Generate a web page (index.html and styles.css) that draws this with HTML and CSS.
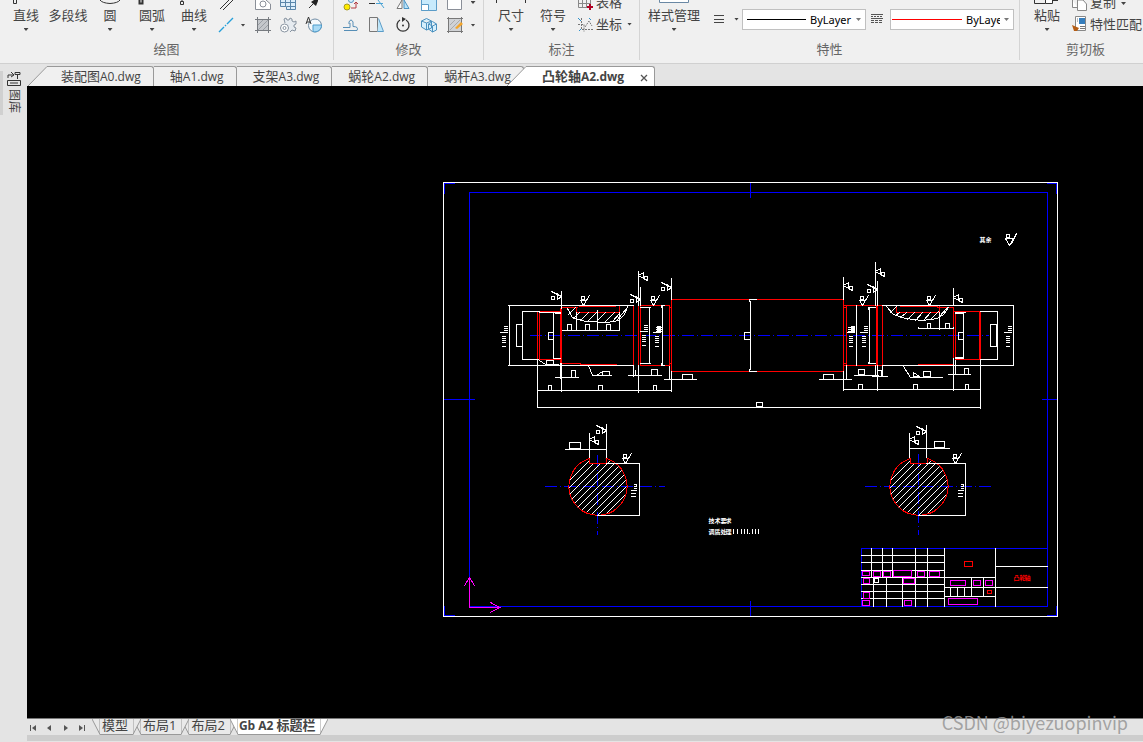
FILE: index.html
```html
<!DOCTYPE html>
<html lang="zh-CN">
<head>
<meta charset="utf-8">
<title>凸轮轴A2.dwg</title>
<link rel="stylesheet" href="styles.css">
</head>
<body>
<div class="app">
  <header class="ribbon">
    <section class="group" aria-label="绘图">
      <div class="tools draw-tools">
        <button class="tool"><svg width="34" height="7" viewBox="0 0 34 7"><path d="M4.500 0v3.500h3V0" class="ink"/></svg><span>直线</span><i class="caret"></i></button>
        <button class="tool"><svg width="34" height="7" viewBox="0 0 34 7"></svg><span>多段线</span></button>
        <button class="tool"><svg width="34" height="7" viewBox="0 0 34 7"><path d="M7 0Q9 3 17 3.500Q25 3 27 0" class="ink"/></svg><span>圆</span><i class="caret"></i></button>
        <button class="tool"><svg width="34" height="7" viewBox="0 0 34 7"><path d="M4.500 0v3.500h3V0" class="ink thick"/></svg><span>圆弧</span><i class="caret"></i></button>
        <button class="tool"><svg width="34" height="7" viewBox="0 0 34 7"><path d="M3.500 1.500h3v3h-3zM5 0v1" class="ink"/></svg><span>曲线</span><i class="caret"></i></button>
        <div class="icons">
          <button aria-label="构造线"><svg width="18" height="12" viewBox="0 0 18 12"><path d="M3 9L12 0M6 10L16 0" class="ink"/></svg></button>
          <i></i>
          <button aria-label="面域"><svg width="18" height="12" viewBox="0 0 18 12"><path d="M1.500 0v9.500h15V4L12 0" fill="#fff" stroke="#8a8f98"/><circle cx="9" cy="4" r="3" fill="none" stroke="#8a8f98"/></svg></button>
          <button aria-label="表格"><svg width="18" height="12" viewBox="0 0 18 12"><path d="M1.500 0v6.500h6v3h9V0" fill="#dceefb" stroke="#5a86aa"/><path d="M1 2.500h15M6.500 0v6M11.500 0v9M8 6.500h8" stroke="#5a86aa"/></svg></button>
          <button aria-label="点"><svg width="18" height="12" viewBox="0 0 18 12"><path d="M4 8L8 4" class="ink"/><path d="M6 2l3-2h4v1l-2 5z" fill="#222"/></svg></button>
          <button aria-label="中心线"><svg width="18" height="18" viewBox="0 0 18 18"><path d="M2 16L7 11M8 10l1-1M10 8l6-6" stroke="#26a0da" stroke-width="1.400"/></svg></button>
          <i class="caret"></i>
          <button aria-label="填充"><svg width="18" height="18" viewBox="0 0 18 18"><rect x="3" y="4" width="11" height="11" fill="#c4c7cb"/><path d="M1 3.500h16M1 14.500h16M3.500 1v16M14.500 1v16" stroke="#777b80"/><path d="M4 9l5-5M4 14L14 4M9 14l5-5" stroke="#9a9ea4"/></svg></button>
          <button aria-label="齿轮"><svg width="18" height="18" viewBox="0 0 18 18"><path d="M6 7L5 3l2-1 1 2h2l1-2 2 1v2l2 1 2-1v3l-2 1v2l2 1-1 3-3-1-2 2" fill="#e6ebf0" stroke="#8793a0"/><circle cx="5.500" cy="12" r="4" fill="#fff" stroke="#8793a0"/><circle cx="5.500" cy="12" r="1.500" stroke="#8793a0"/></svg></button>
          <button aria-label="属性"><svg width="18" height="18" viewBox="0 0 18 18"><circle cx="10" cy="9.500" r="6.500" fill="#f5f9fc" stroke="#6f8ca4"/><path d="M8 9h8.500a6.500 6.500 0 0 1-8.500 6.500z" fill="#a9daf5" stroke="#4c9bcb"/><path d="M1 8L3.500 1L6 8M2 6h3" class="ink"/></svg></button>
        </div>
      </div>
      <h2>绘图</h2>
    </section>
    <section class="group" aria-label="修改">
      <div class="tools">
        <div class="icons modify">
          <button aria-label="复制对象"><svg width="18" height="12" viewBox="0 0 18 12"><circle cx="5" cy="7" r="3" fill="#ffeb00" stroke="#a59a25"/><path d="M9 8h5V2l-2 2m2-2 2 2" fill="none" stroke="#b33b43"/><circle cx="9" cy="0" r="2.500" fill="#d7effc" stroke="#5794c2"/></svg></button>
          <button aria-label="修剪"><svg width="18" height="12" viewBox="0 0 18 12"><path d="M1 3.500h6" class="ink"/><path d="M8 3.500h7M10 0l6 8" stroke="#4aa3d4"/></svg></button>
          <button aria-label="镜像"><svg width="18" height="12" viewBox="0 0 18 12"><path d="M8 0v8.500H3z" fill="#fff" stroke="#777"/><path d="M10 0v8.500h5z" fill="#b9e2f8" stroke="#4d94c4"/></svg></button>
          <button aria-label="缩放"><svg width="18" height="12" viewBox="0 0 18 12"><path d="M1.500 0v10.500h15V0" fill="#c7eafc" stroke="#5b9cc8"/><path d="M1.500 4.500h7v6h-7z" fill="#fff" stroke="#5b9cc8"/></svg></button>
          <button aria-label="拉伸"><svg width="18" height="12" viewBox="0 0 18 12"><path d="M1.500 0v9.500h14V0" fill="#fff" stroke="#8a8f98"/></svg></button>
          <i class="caret"></i>
          <button aria-label="偏移"><svg width="18" height="18" viewBox="0 0 18 18"><path d="M2 14.500h13q2-4-4-4V6q-2-4-4 0v2M1 11.500h7V7" fill="none" stroke="#568eb6"/></svg></button>
          <button aria-label="倾斜"><svg width="18" height="18" viewBox="0 0 18 18"><path d="M1.500 1.500h8v14h-8z" fill="#eee" stroke="#777"/><path d="M10.500 2.500L15.500 15.500h-6" fill="#bde6fa" stroke="#5b9cc8"/></svg></button>
          <button aria-label="旋转"><svg width="18" height="18" viewBox="0 0 18 18"><path d="M6 4a6 6 0 1 0 6 0" fill="none" stroke="#333" stroke-width="1.300"/><path d="M8 1l4 2-4 3z" fill="#333"/><circle cx="9" cy="9.500" r="1" fill="#333"/></svg></button>
          <button aria-label="阵列"><svg width="18" height="18" viewBox="0 0 18 18"><path d="M1.500 5l5-2.500 5 2.500v7l-5 2-5-3zM1.500 5l5 2 5-2M6.500 7v7M8.500 8l4-2.500 4 2.500v6l-4 2-4-3zM8.500 8l4 2 4-2M12.500 10v6" fill="#d6effc" stroke="#4b91bf"/></svg></button>
          <button aria-label="编辑填充"><svg width="18" height="18" viewBox="0 0 18 18"><rect x="3" y="3" width="12" height="12" fill="#d0d2d5"/><path d="M1 2.500h16M1 15.500h16M2.500 1v16M15.500 1v16" stroke="#777"/><path d="M4 9l5-5M4 14L14 4" stroke="#aaa"/><path d="M9 12l6-6 2 2-6 5z" fill="#f3a52b"/></svg></button>
          <i class="caret"></i>
        </div>
      </div>
      <h2>修改</h2>
    </section>
    <section class="group" aria-label="标注">
      <div class="tools note-tools">
        <button class="tool"><svg width="34" height="7" viewBox="0 0 34 7"><path d="M2.500 0v3M31.500 0v3" class="ink"/></svg><span>尺寸</span><i class="caret"></i></button>
        <button class="tool"><svg width="34" height="7" viewBox="0 0 34 7"></svg><span>符号</span><i class="caret"></i></button>
        <div class="commands">
          <button class="command"><svg width="18" height="12" viewBox="0 0 18 12"><path d="M1.500 0v7.500h12V0M1 3.500h13M5.500 0v7M9.500 0v7" fill="none" stroke="#888"/><path d="M10 7h6M13 4v6" stroke="#b00022" stroke-width="2"/></svg><span>表格</span></button>
          <button class="command"><svg width="18" height="18" viewBox="0 0 18 18"><path d="M4.500 3v11.500H16M1 9.500h6v7M8 12l4-6 3 5" fill="none" stroke="#777" stroke-dasharray="2 1"/><path d="M1 3l3 3M12 3l2 2M2 16l2-2" stroke="#2f91cb"/></svg><span>坐标</span><i class="caret"></i></button>
        </div>
      </div>
      <h2>标注</h2>
    </section>
    <section class="group" aria-label="特性">
      <div class="tools">
        <button class="tool wide"><svg width="34" height="7" viewBox="0 0 34 7"><path d="M2.500 0v2.500h29V0" fill="#fff" stroke="#6a88a4"/></svg><span>样式管理</span><i class="caret"></i></button>
        <button class="weight" aria-label="线宽"><svg width="10" height="10" viewBox="0 0 10 10"><path d="M0 1.500h10M0 5.500h10M0 8.500h10" stroke="#444"/></svg><i class="caret"></i></button>
        <label class="combo"><span class="sample"></span><select aria-label="线型"><option>ByLayer</option></select><i class="caret"></i></label>
        <button class="dashes" aria-label="线型样式"><svg width="12" height="10" viewBox="0 0 12 10"><path d="M0 .500h12M0 4.500h12" stroke="#555"/><path d="M0 2.500h12" stroke="#555" stroke-dasharray="2 1"/><path d="M0 6.500h12M0 8.500h12" stroke="#555" stroke-dasharray="3 1"/></svg></button>
        <label class="combo red"><span class="sample"></span><select aria-label="颜色"><option>ByLayer</option></select><i class="caret"></i></label>
      </div>
      <h2>特性</h2>
    </section>
    <section class="group" aria-label="剪切板">
      <div class="tools note-tools">
        <button class="tool"><svg width="34" height="7" viewBox="0 0 34 7"><path d="M4.500 0v3.500h11" class="ink"/><path d="M15.500 0v3.500h7V0M22 .500h6" fill="#fff" stroke="#333"/></svg><span>粘贴</span><i class="caret"></i></button>
        <div class="commands">
          <button class="command"><svg width="18" height="12" viewBox="0 0 18 12"><path d="M1.500 0v7.500h5" fill="#fff" stroke="#888"/><path d="M6.500 0v10.500h9V4L12 0z" fill="#fff" stroke="#888"/></svg><span>复制</span><i class="caret"></i></button>
          <button class="command"><svg width="18" height="18" viewBox="0 0 18 18"><path d="M4.500 1.500h10v14h-10z" fill="#fff" stroke="#888"/><path d="M8 3h6v6H8z" fill="#367ebd"/><path d="M6 4h1M6 6h1M9 11.500h5M9 13.500h5" stroke="#777"/><path d="M1 10l7 3-2 3H3z" fill="#b55e16"/></svg><span>特性匹配</span></button>
        </div>
      </div>
      <h2>剪切板</h2>
    </section>
  </header>

  <aside class="side">
    <button class="library">
      <svg width="14" height="16" viewBox="0 0 14 16"><path d="M1 7V4h5M4 1l3 3-3 2M8 1.500h5v2H8zM10.500 3v5M.500 9.500h13v5H.500zM3 12h8" fill="none" stroke="#333"/></svg>
      <span>图库</span>
    </button>
  </aside>

  <main class="work">
    <nav class="doc-tabs">
      <div class="doc first"><svg width="20" height="20" viewBox="0 0 20 20"><path d="M0 20L19 .500H20V20" fill="#f0f0f0" stroke="none"/><path d="M0 20L19 .500h1" fill="none" stroke="#999"/></svg><button><b>装配图</b>A0.dwg</button></div>
      <div class="doc"><button><b>轴</b>A1.dwg</button></div>
      <div class="doc"><button><b>支架</b>A3.dwg</button></div>
      <div class="doc"><button><b>蜗轮</b>A2.dwg</button></div>
      <div class="doc"><button><b>蜗杆</b>A3.dwg</button></div>
      <div class="doc active"><svg width="20" height="20" viewBox="0 0 20 20"><path d="M0 20L19 .500H20V20" fill="#fff" stroke="none"/><path d="M0 20L19 .500h1" fill="none" stroke="#999"/></svg><button><b>凸轮轴</b>A2.dwg</button><button class="close" aria-label="关闭"><svg width="8" height="8" viewBox="0 0 8 8"><path d="M1 1l6 6M7 1L1 7" stroke="#555" stroke-width="1.300"/></svg></button></div>
    </nav>

    <div class="canvas">
      <svg class="drawing" width="100%" height="100%">
        <defs>
          <path id="rough" d="M-3-5H3L0 0ZM0 0L6-10M-2-9h3v3h-3z"/>
          <path id="rough-right" d="M0 0L5-3V3ZM5 3l4 2M6 1h3v3h-3z"/>
          <path id="rough-left" d="M-10-5L0 0L-4 3V-3M-10 0h3v3h-3z"/>
          <path id="reading" d="M4 0h3M4 2h3M4 4h3M4 6h3M0 6h3M2 10h3M2 12h3M2 14h3M2 16h3M2 20h3"/>
          <path id="reading-small" d="M3 0h2v2h-2M3 4h2M0 6h5M0 9h4M0 12h4"/>
          <clipPath id="disc"><path d="M-8-23H8V-28A29 29 0 1 1-8-28Z"/></clipPath>
          <g id="section">
            <g clip-path="url(#disc)"><path class="w" d="M-70 29L-12-29M-63 29L-5-29M-56 29L2-29M-49 29L9-29M-42 29L16-29M-35 29L23-29M-28 29L30-29M-21 29L37-29M-14 29L44-29M-7 29L51-29M0 29L58-29M7 29L65-29M14 29L72-29"/></g>
            <path class="r" d="M-8-28V-23H9V-28M9-28A29 29 0 1 1-8-28"/>
          </g>
        </defs>
        <g transform="translate(-26.500 -85.500)">
          <!-- sheet frame -->
          <path class="b" d="M469 192H1047V606H469ZM444 193V183H454M1047 183H1056V193M444 606V615H454M1047 615H1056V606M750 182V197M750 601V616M443 399H474M1042 399H1057"/>
          <rect class="w" x="443" y="182" width="614" height="434"/>
          <!-- centre lines -->
          <path class="b axis" d="M529 335H988M544 486H664M864 486H990M597 454V534M918 453V534"/>

          <!-- shaft outline -->
          <path class="r" d="M537 311V359M539 311V359M538 311H560M538 359H561M560 308V363M561 308V363M561 307H577M576 307V312H619V306M579 306H615M561 363H580M580 364H616M633 305V365M638 305V365M640 305V365M640 305H669M640 365H669M669 305V365M669 307H671M669 363H671M671 299V371M671 299H843M671 371H843M843 299V371M843 305H882M843 365H882M846 305V365M843 307H846M843 363H846M876 305V365M877 305V365M882 305V365M900 306H937M896 306V312H939V306M937 307H953M953 307V357M955 311V359M953 311H980M955 359H980M979 311V359M980 311V359M918 364H953"/>
          <path class="w" d="M508 305H633M508 365H633M509 305V365M516 324H522V346H516ZM539 311H522V359H538M553 312V358M539 312H560M555 313H560M553 358H560M548 332H553V339H548ZM561 291V308M561 363V391M560 363V378"/>
          <path class="w" d="M567 308L572 317L585 321L607 322L618 320L624 314L627 306M568 314L575 307M573 318L579 312M580 320L588 312M587 321L596 312M596 321L605 312M604 322L614 312M612 321L619 313M617 319L627 307"/>
          <path class="w" d="M576 312V330M597 310V330M619 312V330M562 330H619M567 324h4v6M567 330v-6M585 330v-6h4v6M606 330v-6h4v6"/>
          <path class="w" d="M588 365L592 375H611M596 375L602 371V375M602 371H609V375M555 377H578M571 370H575V377H571ZM539 360L545 364H558M546 360H553V364H546Z"/>
          <path class="w" d="M538 390H671M548 385H551V390H548ZM598 385H602V390H598ZM653 385H656V390H653ZM537 359V407M537 407H980M980 359V408M633 365V376M638 365V392M638 271V305M640 287V305M628 375H643M641 375H661M635 370V375M651 369H657V375H651Z"/>
          <path class="w" d="M640 307H650M649 307V363M640 363H650M661 307V305H664M662 306V365M661 363V365H664M671 278V299M671 371V391M669 366V379M664 379H696M682 374H692V379H682Z"/>
          <path class="w" d="M756 299H749V301M750 301V369M749 369V371H756M744 332H750V339H744ZM756 402H762V406H756ZM819 379H851M823 374H833V379H823ZM843 277V299M843 371V390M846 365V379M856 305V365M875 307H868V309M869 308V362M868 362V363H875"/>
          <path class="w" d="M875 262V305M877 281V305M875 365V375M877 365V390M882 305H1013V365H882V376M854 375H878M858 369H864V374H858ZM872 376H887M878 370H881V375"/>
          <path class="w" d="M886 306L893 314L905 318L922 320L937 318L943 314L948 307M890 312L896 306M895 315L899 312M900 317L906 312M907 319L914 312M915 320L922 312M923 320L930 312M930 319L938 311M938 317L947 307"/>
          <path class="w" d="M939 312V329M918 327V328H953V327M927 328V323H930V328M945 328V323H949V328M953 288V305M953 358V390M955 360V374M980 311H997V359H980M955 312H965M955 313H963V358H955M955 357H963M958 332H963V339H958ZM990 324H996V346H990Z"/>
          <path class="w" d="M903 366L910 377H942M913 376V372L919 376ZM923 371H930V376H923ZM948 374H970M964 368H968V374H964ZM843 389H980M858 384H862V389H858ZM913 384H917V389H913ZM965 384H968V389H965Z"/>
          <g class="w">
            <use href="#reading" x="500" y="326"/><use href="#reading" x="640" y="325"/><use href="#reading" x="653" y="326"/><path d="M656 327h5M656 329h5M656 331h5"/>
            <use href="#reading" x="847" y="326"/><path d="M848 327h6M848 329h6M848 331h6"/><use href="#reading" x="860" y="326"/><use href="#reading" x="1004" y="326"/>
            <use href="#rough-left" x="561" y="296"/><use href="#rough" x="583" y="305"/><use href="#rough-right" x="638" y="275"/><use href="#rough-left" x="640" y="299"/>
            <use href="#rough" x="653" y="305"/><use href="#rough-left" x="671" y="287"/><use href="#rough-right" x="843" y="285"/><use href="#rough" x="862" y="305"/>
            <use href="#rough-right" x="875" y="271"/><use href="#rough-left" x="877" y="289"/><use href="#rough" x="929" y="305"/><use href="#rough-right" x="953" y="297"/>
            <path d="M1005 238H1013L1009 245ZM1011 243L1016 233M1006 234h3v3h-3z"/>
          </g>

          <!-- keyway sections -->
          <use href="#section" x="597" y="486"/>
          <use href="#section" x="918" y="486"/>
          <path class="w" d="M589 433V457M606 424V457M565 449H606M569 442H580V448H569ZM606 463H639V515H597M909 433V457M926 425V457M909 448H949M934 441H944V447H934ZM926 463H965V515H918"/>
          <g class="w">
            <use href="#rough-left" x="606" y="430"/><use href="#rough-right" x="589" y="439"/><use href="#rough" x="625" y="463"/><use href="#reading-small" x="631" y="484"/>
            <use href="#rough-left" x="926" y="431"/><use href="#rough-right" x="909" y="439"/><use href="#rough" x="955" y="463"/><use href="#reading-small" x="958" y="484"/>
          </g>
          <g class="mark">
            <text x="979 985" y="241">其余</text>
            <text x="708 714 720 725" y="522">技术要求</text>
            <text x="708 714 720 725" y="533">调质处理</text>
          </g>
          <path class="w" d="M733 529V533M737 529V533M741 529V533M744 529V533M747 529V533M749 533V533M752 529V533M755 529V533M758 529V533"/>

          <!-- title block -->
          <path class="b" d="M861 548H1047M861 548V606"/>
          <path class="w" d="M861 555H944M861 562H944M861 570H944M861 577H995M861 584H944M861 591H944M861 598H944M871 548V577M882 548V577M892 548V577M915 548V606M927 548V606M944 548V606M995 548V606M873 577V606M886 577V606M902 577V606M944 587H1047M995 566H1047M944 596H995M950 587V596M957 587V596M964 587V596M971 577V596M983 577V596M874 578h4v4h-4z"/>
          <path class="m" d="M862 571h7v4h-7zM873 571h7v5h-7zM883 571h7v5h-7zM893 570h18v6h-18zM917 571h7v5h-7zM929 571h10v5h-10zM863 578h6v5h-6zM903 578h11v5h-11zM950 580h15v5h-15zM973 580h7v5h-7zM985 580h7v5h-7zM863 592h6v6h-6zM862 600h7v5h-7zM904 600h7v5h-7zM948 598h29v6h-29z"/>
          <path class="r" d="M964 561h8v5h-8zM987 590h4v3h-4z"/>
          <text class="part" x="1013 1019 1024" y="579">凸轮轴</text>

          <!-- coordinate axes -->
          <path class="m" d="M469 577V607H499M464 585L469 577L474 585M490 602L499 607L490 612"/>
        </g>
      </svg>
    </div>

    <footer class="layouts">
      <div class="layout-row">
        <div class="steps">
          <button aria-label="首个"><svg width="7" height="8" viewBox="0 0 7 8"><path d="M.500 1v6" stroke="#555"/><path d="M6 1v6L2 4z" fill="#555"/></svg></button>
          <button aria-label="上一个"><svg width="7" height="8" viewBox="0 0 7 8"><path d="M5 1v6L1 4z" fill="#555"/></svg></button>
          <button aria-label="下一个"><svg width="7" height="8" viewBox="0 0 7 8"><path d="M2 1v6l4-3z" fill="#555"/></svg></button>
          <button aria-label="末个"><svg width="7" height="8" viewBox="0 0 7 8"><path d="M6.500 1v6" stroke="#555"/><path d="M1 1v6l4-3z" fill="#555"/></svg></button>
        </div>
        <div class="layout third"><svg width="8" height="16" viewBox="0 0 8 16"><path d="M0 0L8 15.500V0"/></svg><button>模型</button><svg width="8" height="16" viewBox="0 0 8 16"><path d="M0 0V15.500L8 0"/></svg></div>
        <div class="layout second"><svg width="8" height="16" viewBox="0 0 8 16"><path d="M0 0L8 15.500V0"/></svg><button>布局1</button><svg width="8" height="16" viewBox="0 0 8 16"><path d="M0 0V15.500L8 0"/></svg></div>
        <div class="layout"><svg width="8" height="16" viewBox="0 0 8 16"><path d="M0 0L8 15.500V0"/></svg><button>布局2</button><svg width="8" height="16" viewBox="0 0 8 16"><path d="M0 0V15.500L8 0"/></svg></div>
        <div class="layout active"><svg width="8" height="16" viewBox="0 0 8 16"><path d="M0 0L8 15.500V0"/></svg><button>Gb A2 <b>标题栏</b></button><svg width="8" height="16" viewBox="0 0 8 16"><path d="M0 0V15.500L8 0"/></svg></div>
      </div>
      <div class="scroll"></div>
    </footer>
  </main>
  <div class="watermark">CSDN @biyezuopinvip</div>
</div>
</body>
</html>
```
FILE: styles.css
```css
* { box-sizing: border-box; }

body {
  margin: 0;
  font-family: "Open Sans", "Noto Sans CJK SC", sans-serif;
  font-size: 13px;
  color: #444;
  background: #e4e4e4;
}

button {
  margin: 0;
  padding: 0;
  border: 0;
  background: none;
  color: inherit;
  font: inherit;
  white-space: nowrap;
}

svg { display: block; fill: none; flex: none; }
.ink { stroke: #333; fill: none; }
.thick { stroke-width: 2; }

.app {
  position: relative;
  display: grid;
  grid-template: auto 1fr / 27px minmax(0, 1fr);
  min-height: 100vh;
  overflow: hidden;
}

/* ribbon */
.ribbon {
  grid-column: 1 / -1;
  display: grid;
  grid-template-columns: 334px 150px 156px 380px minmax(131px, 1fr);
  height: 64px;
  background: #f0f0f0;
  border-bottom: 1px solid #d0d0d0;
}

.group {
  display: flex;
  flex-direction: column;
  height: 60px;
  border-right: 1px solid #d4d4d4;
}
.group:last-child { border: 0; width: 131px; }

.tools { display: flex; height: 39px; padding-left: 4px; }
.draw-tools { padding-left: 5px; }
.note-tools { padding-left: 6px; }

.group h2 {
  margin: 0;
  font-size: 13px;
  line-height: 20px;
  font-weight: 400;
  text-align: center;
  color: #666;
}

.tool {
  display: flex;
  flex-direction: column;
  align-items: center;
  width: 42px;
  line-height: 16px;
}
.tool .caret { margin-top: 5px; }
.wide { width: 60px; }

.caret {
  width: 5px;
  height: 3px;
  background: #444;
  clip-path: polygon(0 0, 100% 0, 50% 100%);
}

.icons {
  display: grid;
  grid-template: 16px 18px / 18px 16px 24px 26px 26px;
  justify-items: center;
  align-items: center;
  margin-left: 2px;
}
.icons button:nth-child(-n+5) { align-self: start; }
.modify {
  grid-template-columns: 26px 26px 26px 26px 26px 10px;
  margin-left: 0;
}
.modify > :nth-child(6) { align-self: start; margin-top: 1px; }

.commands { display: flex; flex-direction: column; }
.command { display: flex; align-items: center; gap: 1px; height: 18px; padding-left: 3px; line-height: 16px; }
.command:first-child { height: 15px; align-items: flex-start; }
.command:first-child span { margin-top: -6px; }
.command:first-child .caret { margin-top: 2px; }
.command .caret { margin-left: 4px; }

.weight { display: flex; align-items: center; gap: 10px; height: 38px; margin-left: 10px; width: 28px; }
.dashes { height: 38px; margin: 0 7px 0 5px; }

.combo {
  display: flex;
  align-items: center;
  width: 124px;
  height: 21px;
  margin-top: 9px;
  padding: 0 4px 0 4px;
  background: #fff;
  border: 1px solid #c0c0c0;
}
.sample { flex: none; width: 59px; height: 1px; background: #000; }
.combo select {
  flex: 1;
  min-width: 0;
  margin-left: 4px;
  padding: 0;
  border: 0;
  background: none;
  appearance: none;
  color: #000;
  font: 11px/16px "Noto Sans", sans-serif;
}
.combo .caret { flex: none; background: #777; margin-left: 4px; }
.red { padding-left: 1px; }
.red .sample { width: 70px; background: #f00; }

/* library strip */
.side { padding-top: 7px; }
.library {
  display: flex;
  flex-direction: column;
  align-items: center;
  gap: 2px;
  width: 24px;
  height: 44px;
  border-left: 3px solid #d0d0d0;
}
.library span {
  width: 24px;
  margin: 5px 0;
  font-size: 12px;
  line-height: 14px;
  transform: rotate(90deg);
}

/* drawing tabs */
.work { display: flex; flex-direction: column; }
.doc-tabs { display: flex; align-items: flex-end; height: 22px; padding-left: 1px; }
.doc {
  display: flex;
  height: 20px;
  font-size: 12px;
  line-height: 18px;
}
.doc > button:not(.close) {
  padding: 0 12px 0 16px;
  background: #f0f0f0;
  border-top: 1px solid #999;
  border-right: 1px solid #999;
  border-radius: 0 3px 0 0;
}
.doc b, .layout b { font-size: 13px; font-weight: inherit; }
.doc.first > button { padding-left: 13px; }
.doc.active { margin-left: -17px; font-weight: 700; }
.doc.active > button:not(.close) { padding: 0 13px 0 15px; background: #fff; border-right: 0; border-radius: 0; }
.doc > .close {
  width: 18px;
  padding: 2px 0 0 3px;
  background: #fff;
  border-top: 1px solid #999;
  border-right: 1px solid #999;
  border-radius: 0 3px 0 0;
}

.canvas { flex: 1; display: flex; min-height: 400px; background: #000; }
.drawing { shape-rendering: crispEdges; stroke-linecap: square; }
.w { stroke: #fff; }
.r { stroke: #f00; }
.b { stroke: #00f; }
.m { stroke: #f0f; }
.axis { stroke-dasharray: 12 3 1 3; stroke-linecap: butt; }
.mark text, .part { font: 700 6px "Noto Sans CJK SC", sans-serif; fill: #fff; }
.part { fill: #f00; }

/* layout tabs */
.layouts { height: 24px; border-top: 1px solid #777; }
.layout-row { display: flex; height: 16px; }
.steps { display: flex; gap: 9px; align-items: center; width: 65px; padding: 2px 0 0 3px; }
.layout { position: relative; display: flex; height: 16px; margin-left: -8px; }
.layout:nth-child(2) { margin-left: 0; }
.layout svg { fill: #e9e9e9; stroke: #999; }
.layout button { padding: 0 5px 3px 2px; line-height: 12px; background: #e9e9e9; border-bottom: 1px solid #999; }
.layout.second { z-index: 1; }
.layout.third { z-index: 2; }
.layout.active { z-index: 3; font-size: 12px; font-weight: 700; }
.layout.active svg { fill: #fff; }
.layout.active button { background: #fff; padding: 0 4px 3px 1px; }
.scroll { height: 6px; background: #cdcdcd; }

.watermark {
  position: absolute;
  right: 15px;
  bottom: 8px;
  font: 18px/24px "Noto Sans CJK SC", sans-serif;
  color: rgba(150, 150, 150, 0.85);
}
```
